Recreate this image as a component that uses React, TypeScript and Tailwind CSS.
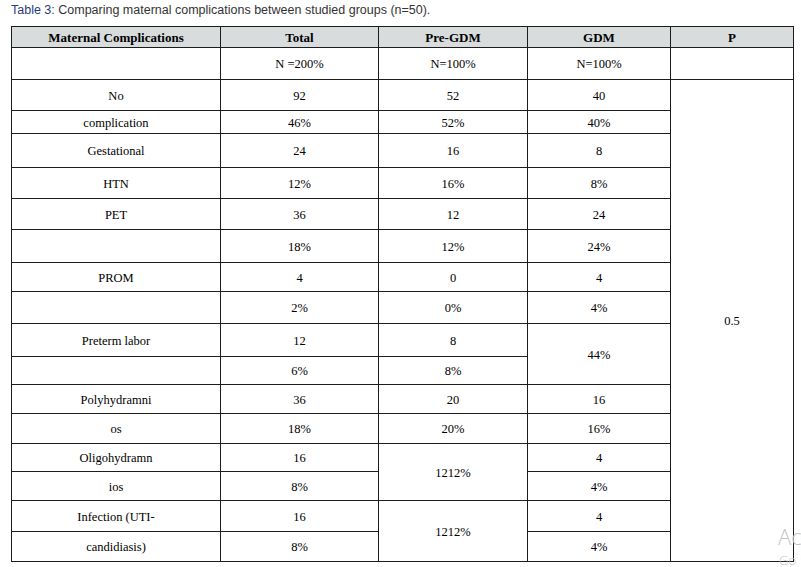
import React from "react";

type Cell = { text?: string; rowSpan?: number };

const rows: { h: number; cells: Cell[] }[] = [
  { h: 32, cells: [{}, { text: "N =200%" }, { text: "N=100%" }, { text: "N=100%" }, {}] },
  {
    h: 31,
    cells: [{ text: "No" }, { text: "92" }, { text: "52" }, { text: "40" }, { text: "0.5", rowSpan: 16 }],
  },
  { h: 23, cells: [{ text: "complication" }, { text: "46%" }, { text: "52%" }, { text: "40%" }] },
  { h: 34, cells: [{ text: "Gestational" }, { text: "24" }, { text: "16" }, { text: "8" }] },
  { h: 31, cells: [{ text: "HTN" }, { text: "12%" }, { text: "16%" }, { text: "8%" }] },
  { h: 31, cells: [{ text: "PET" }, { text: "36" }, { text: "12" }, { text: "24" }] },
  { h: 33, cells: [{}, { text: "18%" }, { text: "12%" }, { text: "24%" }] },
  { h: 29, cells: [{ text: "PROM" }, { text: "4" }, { text: "0" }, { text: "4" }] },
  { h: 32, cells: [{}, { text: "2%" }, { text: "0%" }, { text: "4%" }] },
  { h: 33, cells: [{ text: "Preterm labor" }, { text: "12" }, { text: "8" }, { text: "44%", rowSpan: 2 }] },
  { h: 28, cells: [{}, { text: "6%" }, { text: "8%" }] },
  { h: 29, cells: [{ text: "Polyhydramni" }, { text: "36" }, { text: "20" }, { text: "16" }] },
  { h: 30, cells: [{ text: "os" }, { text: "18%" }, { text: "20%" }, { text: "16%" }] },
  { h: 28, cells: [{ text: "Oligohydramn" }, { text: "16" }, { text: "1212%", rowSpan: 2 }, { text: "4" }] },
  { h: 29, cells: [{ text: "ios" }, { text: "8%" }, { text: "4%" }] },
  { h: 31, cells: [{ text: "Infection (UTI-" }, { text: "16" }, { text: "1212%", rowSpan: 2 }, { text: "4" }] },
  { h: 30, cells: [{ text: "candidiasis)" }, { text: "8%" }, { text: "4%" }] },
];

const headers = ["Maternal Complications", "Total", "Pre-GDM", "GDM", "P"];

export default function App() {
  return (
    <div className="relative w-[801px] h-[567px] overflow-hidden bg-white">
      <div className="pl-[11px] pt-[3px] text-[12.5px] leading-[15px] text-[#333] font-['Liberation_Sans',Arial,sans-serif]">
        <span className="text-[#1f3d7a]">Table 3:</span> Comparing maternal complications between studied groups (n=50).
      </div>
      <table className="mt-[8px] ml-[11px] w-[782px] table-fixed border-collapse border border-[#1c1c1c] font-['Liberation_Serif',serif] text-[12.5px] text-black">
        <colgroup>
          <col className="w-[209px]" />
          <col className="w-[158px]" />
          <col className="w-[149px]" />
          <col className="w-[143px]" />
          <col className="w-[123px]" />
        </colgroup>
        <thead>
          <tr className="h-[21px] bg-[#d8dcdc]">
            {headers.map((h) => (
              <th key={h} className="border border-[#1c1c1c] p-0 text-center align-middle text-[13px] font-bold leading-none">
                {h}
              </th>
            ))}
          </tr>
        </thead>
        <tbody>
          {rows.map((r, i) => (
            <tr key={i} style={{ height: r.h }}>
              {r.cells.map((c, j) => (
                <td
                  key={j}
                  rowSpan={c.rowSpan}
                  className="border border-[#1c1c1c] p-0 pt-[2px] text-center align-middle leading-none"
                >
                  {c.text}
                </td>
              ))}
            </tr>
          ))}
        </tbody>
      </table>
      <div className="absolute left-[778px] top-[526px] text-[22px] leading-[20px] text-[#c4c4c4] font-['Open_Sans',sans-serif] font-light">
        Ac
      </div>
      <div className="absolute left-[779px] top-[554px] text-[13px] leading-[13px] text-[#c4c4c4] font-['Open_Sans',sans-serif] font-light">
        Go
      </div>
    </div>
  );
}
